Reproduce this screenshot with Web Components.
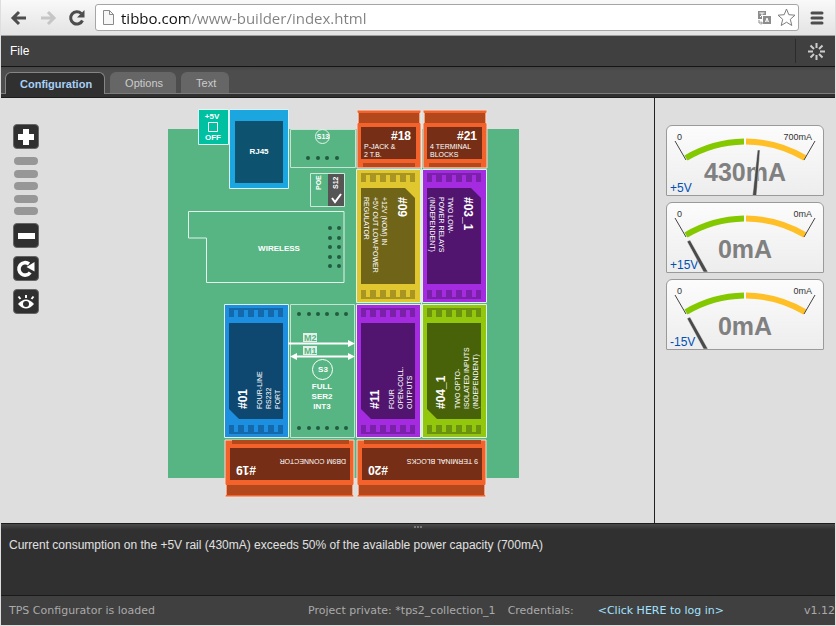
<!DOCTYPE html>
<html lang="en">
<head>
<meta charset="utf-8">
<title>TPS Configurator</title>
<style>
html, body { margin: 0; height: 100%; }
body { background: #dedede; font-family: "Liberation Sans", Arial, sans-serif; font-size: 12px; }
</style>
</head>
<body>
<tps-app></tps-app>
<script>
const define = (name, html, setup) => {
  const tpl = document.createElement('template');
  customElements.define(name, class extends HTMLElement {
    constructor() { super(); this.attachShadow({ mode: 'open' }); }
    connectedCallback() {
      if (this.shadowRoot.childNodes.length) return;
      tpl.innerHTML = typeof html === 'function' ? html(this) : html;
      this.shadowRoot.append(tpl.content.cloneNode(true));
      if (setup) setup(this);
    }
  });
};

define('browser-bar', `
<style>
:host { display: flex; align-items: center; height: 36px; box-sizing: border-box; padding: 0 0 0 3px; background: linear-gradient(#f9f9f9, #e3e3e3); border-bottom: 1px solid #a0a0a0; }
button { border: 0; padding: 0; background: none; display: grid; place-items: center; flex: none; }
.nav { width: 29px; height: 28px; }
.box { flex: 1; min-width: 0; display: flex; align-items: center; height: 25px; margin-left: 4px; padding: 0 1px 0 6px; background: #fff; border: 1px solid #a6a6a6; border-radius: 3px; }
.box svg { flex: none; }
input { flex: 1; min-width: 0; margin: 0 0 0 6px; padding: 0; height: 24px; border: 0; outline: 0; font: 15px "Open Sans", "Noto Sans", sans-serif; color: #808080; -webkit-text-fill-color: transparent; background: linear-gradient(90deg, #111 68px, #808080 68px); -webkit-background-clip: text; background-clip: text; }
.tool { width: 22px; height: 22px; }
.menu { width: 36px; height: 28px; }
</style>
<button class="nav" aria-label="Back"><svg width="18" height="16" viewBox="0 0 18 16" fill="none" stroke="#4d4d4d" stroke-width="3"><path d="M9 2 3 8l6 6M3 8h13"/></svg></button>
<button class="nav" aria-label="Forward" disabled><svg width="18" height="16" viewBox="0 0 18 16" fill="none" stroke="#c6c6c6" stroke-width="3"><path d="m9 2 6 6-6 6M15 8H2"/></svg></button>
<button class="nav" aria-label="Reload"><svg width="18" height="18" viewBox="0 0 18 18"><path d="M14.500 11.500a6.200 6.200 0 1 1-1.200-7" fill="none" stroke="#4d4d4d" stroke-width="3"/><path d="M16.500 1v7.500H9z" fill="#4d4d4d"/></svg></button>
<div class="box">
<svg width="13" height="17" viewBox="0 0 13 17" fill="#f7f7f7" stroke="#8a8a8a"><path d="M1.500 1.500h6l4 4v10h-10z"/><path d="M7.500 1.500v4h4" fill="none"/></svg>
<input aria-label="Address" value="tibbo.com/www-builder/index.html">
<button class="tool" aria-label="Translate"><svg width="15" height="15" viewBox="0 0 15 15"><path d="M1 1h8v4H5v4H1z" fill="#8c8c8c"/><path d="M6 6h8v8H6z" fill="#8c8c8c"/><path d="M2.500 3h5M5 3v2L3 7m5.500 5L10 8l1.500 4M9 11h2" fill="none" stroke="#fff"/><path d="M2 10v3h3M4 11.500l1.500 1.500L4 14.500" fill="none" stroke="#8c8c8c"/></svg></button>
<button class="tool" aria-label="Bookmark"><svg width="19" height="19" viewBox="0 0 19 19" fill="#fff" stroke="#7d7d7d" stroke-linejoin="round"><path d="m9.500 1 2.300 5.700 6.200.5-4.700 4.100 1.500 6.200-5.300-3.300-5.300 3.300 1.500-6.200L1 7.200l6.200-.5z"/></svg></button>
</div>
<button class="menu" aria-label="Menu"><svg width="14" height="14" viewBox="0 0 14 14" stroke="#4d4d4d" stroke-width="3" stroke-linecap="round"><path d="M2 2h10M2 7h10M2 12h10"/></svg></button>
`);

define('menu-bar', `
<style>
:host { display: flex; align-items: center; justify-content: space-between; height: 30px; background: #404040; border-bottom: 1px solid #161616; }
button { border: 0; background: none; color: #fff; font: inherit; padding: 0 9px; height: 24px; }
.spin { display: grid; place-items: center; width: 40px; padding: 0 0 0 2px; border-left: 1px solid #2b2b2b; }
</style>
<button>File</button>
<button class="spin" aria-label="Loading"><svg width="17" height="17" viewBox="0 0 17 17" stroke="#ccc" stroke-width="2"><path d="M8.500 0v5M8.500 12v5M0 8.500h5M12 8.500h5M2.500 2.500l3.500 3.500M11 11l3.500 3.500M14.500 2.500 11 6M6 11l-3.500 3.500"/></svg></button>
`);

define('tab-strip', `
<style>
:host { display: flex; align-items: flex-end; gap: 5px; height: 26px; padding: 0 4px; background: linear-gradient(#464646, #4d4d4d 4px); border-bottom: 1px solid #7c7c7c; }
::slotted(button) { height: 21px; border: 1px solid #666; border-bottom: 0; border-radius: 6px 6px 0 0; background: #666; color: #ccc; font: 11px "Liberation Sans", sans-serif; padding: 0 12px 0 14px; margin: 0; }
::slotted(button[aria-selected="true"]) { position: relative; height: 22px; margin-bottom: -1px; background: #303030; border-color: #858585; color: #a8d0f6; font-weight: bold; }
</style>
<slot></slot>
`);

define('zoom-tools', `
<style>
:host { display: flex; flex-direction: column; gap: 8px; padding: 26px 0 0 12px; }
button { display: grid; place-items: center; width: 26px; height: 25px; padding: 0; border: 1px solid #666; border-radius: 4px; background: #303030; }
.levels { display: flex; flex-direction: column; justify-content: space-between; height: 58px; padding: 0 1px; }
.levels button { width: 24px; height: 8px; border: 0; border-radius: 4px; background: #979797; }
</style>
<button aria-label="Zoom in"><svg width="18" height="18" viewBox="0 0 18 18" fill="#fff"><path d="M6 1h6v5h5v6h-5v5H6v-5H1V6h5z"/></svg></button>
<div class="levels"><button aria-label="Zoom level 5"></button><button aria-label="Zoom level 4"></button><button aria-label="Zoom level 3"></button><button aria-label="Zoom level 2"></button><button aria-label="Zoom level 1"></button></div>
<button aria-label="Zoom out"><svg width="18" height="18" viewBox="0 0 18 18" fill="#fff"><path d="M1 6h17v6H1z"/></svg></button>
<button aria-label="Rotate"><svg width="20" height="20" viewBox="0 0 20 20"><path d="M14.200 13.500A6.200 6.200 0 1 1 13 5" fill="none" stroke="#fff" stroke-width="3.600"/><path d="M18.500 3v9.500L10.500 8z" fill="#fff"/></svg></button>
<button aria-label="View"><svg width="20" height="20" viewBox="0 0 20 20"><path d="M2 12q8-9 16 0-8 9-16 0z" fill="#fff"/><circle cx="10" cy="12" r="3" fill="#303030"/><path d="M10 3v3M2.500 4.500l2 2.500M17.500 4.500l-2 2.500" stroke="#fff" stroke-width="2"/></svg></button>
`);

/* Circuit board: each helper returns the markup of one kind of part. */
const INK = 'fill="#fff"';
const turned = (x, y, angle, size, text, extra = '') =>
  `<text transform="translate(${x} ${y}) rotate(${angle})" font-size="${size}" ${INK} ${extra}>${text}</text>`;
const dots = (xs, ys) => ys.map(y => xs.map(x => `<circle cx="${x}" cy="${y}" r="2" fill="#225c40"/>`).join('')).join('');
const notches = (x, y) => [6, 16, 26, 36, 46].map(d => `M${x + d} ${y}h4v7h-4z`).join('');

const chip = (x, y, up, c, id, lines) => {
  const inner = up
    ? `M${x + 5} ${y + 19}h54v96h-44l-10-10z`
    : `M${x + 5} ${y + 19}h44l10 10v86h-54z`;
  const text = up
    ? turned(x + 23, y + 105, -90, 12, id, 'font-weight="bold"') + lines.map((t, i) => turned(x + 38 + 9 * i, y + 105, -90, 7, t)).join('')
    : turned(x + 42, y + 28, 90, 12, id, 'font-weight="bold"') + lines.map((t, i) => turned(x + 26 - 9 * i, y + 28, 90, 7, t)).join('');
  return `<g><path d="M${x + .5} ${y + .5}h64v133h-64z" fill="${c[0]}" stroke="#dff0e7"/>
    <path d="M${x + 5} ${y + 4}h54v9h-54zM${x + 5} ${y + 121}h54v9h-54z" fill="${c[1]}"/>
    <path d="${notches(x + 4, y + 6)}${notches(x + 4, y + 121)}" fill="${c[0]}"/>
    <path d="${inner}" fill="${c[2]}"/>${text}</g>`;
};
const topBlock = (x, id, lines) => `<g><path d="M${x} 110h64v3h-1v10h1v45h-64v-45h1v-10h-1z" fill="#f2622a" stroke="#eedfd8"/>
  <path d="M${x + 2} 113h60v10h-60zM${x + 6} 163h52v4h-52z" fill="#b3481d"/>
  <path d="M${x + 4} 127h55v32h-55z" fill="#762f16"/>
  <text x="${x + 54}" y="140" text-anchor="end" font-size="12" font-weight="bold" ${INK}>${id}</text>
  ${lines.map((t, i) => `<text x="${x + 7}" y="${149 + 8 * i}" font-size="7" ${INK}>${t}</text>`).join('')}</g>`;
const bottomBlock = (x, id, label) => `<g><path d="M${x} 440h129v45h-1v10h1v2h-129v-2h1v-10h-1z" fill="#f2622a" stroke="#eedfd8"/>
  <path d="M${x + 7} 440h117v4h-117zM${x + 2} 485h125v10h-125z" fill="#b3481d"/>
  <path d="M${x + 5} 448h120v32h-120z" fill="#762f16"/>
  ${turned(x + 31, 466, 180, 12, id, 'font-weight="bold"')}${turned(x + 121, 459, 180, 7, label)}</g>`;

const BLUE = ['#1c8fe0', '#1369ab', '#0e4770'], GOLD = ['#e1c72f', '#a99622', '#6f6418'];
const VIOLET = ['#a52be0', '#7b20a8', '#511570'], LIME = ['#93c70e', '#6c9310', '#486209'];

define('circuit-board', `
<style>
:host { display: block; }
svg { display: block; margin: 0 auto; font-family: "Liberation Sans", sans-serif; }
</style>
<svg width="351" height="390" viewBox="168 108 351 390" role="img" aria-label="Board layout">
<path d="M168 129h351v349H168z" fill="#57b583"/>
<g fill="none" stroke="#c5e5d4">
<path d="M290.500 129.500h65v38h-65zM290.500 304.500h64v133h-64z"/>
<path d="M188.500 211.500h155.500v71H206.500v-44.500h-18z" stroke="#e4f3eb"/>
<path d="M421.500 112v325" stroke="#d8eee2"/>
</g>
<path d="M198.500 109.500h30v35h-30z" fill="#00c0a2" stroke="#dff5f0"/>
<path d="M208.500 122.500h9v9h-9z" fill="none" stroke="#fff"/>
<g font-size="8" font-weight="bold" text-anchor="middle" ${INK}>
<text x="212" y="119">+5V</text><text x="213" y="140">OFF</text>
</g>
<path d="M229.500 109.500h59v79h-59z" fill="#1ca6e0" stroke="#dceff8"/>
<path d="M235 121h48v62h-48z" fill="#0d5370"/>
<circle cx="322.500" cy="136.500" r="7" fill="none" stroke="#e4f3eb"/>
<circle cx="322.500" cy="369.500" r="10" fill="none" stroke="#fff"/>
<g font-size="8" font-weight="bold" text-anchor="middle" ${INK}>
<text x="259" y="154">RJ45</text><text x="279" y="251">WIRELESS</text>
<text x="323" y="139" font-size="7">S13</text><text x="323" y="372">S3</text>
<text x="322" y="389">FULL</text><text x="322" y="399">SER2</text><text x="322" y="409">INT3</text>
</g>
<path d="M310.500 173.500h34v33h-34z" fill="#57b583" stroke="#d0e8dc"/>
<path d="M328 174h16v32h-16z" fill="#555"/>
${turned(321, 190, -90, 7, 'POE', 'font-weight="bold"')}${turned(338, 189, -90, 7, 'S12', 'font-weight="bold"')}
<path d="m332 198 3 4 6-8" fill="none" stroke="#fff" stroke-width="2"/>
${dots([308, 318, 327, 337], [158])}
${dots([330, 339], [228, 238, 247, 257, 266])}
${dots([299, 309, 318, 327, 337, 346], [314, 428])}
<path d="M303 333h14v9h-14zM303 346h14v9h-14z" fill="#e4f1ea"/>
<g font-size="9" font-weight="bold" fill="#57b583"><text x="304" y="341">M2</text><text x="304" y="354">M1</text></g>
${chip(224, 304, true, BLUE, '#01', ['FOUR-LINE', 'RS232', 'PORT'])}
${chip(356, 304, true, VIOLET, '#11', ['FOUR', 'OPEN-COLL.', 'OUTPUTS'])}
${chip(422, 304, true, LIME, '#04_1', ['TWO OPTO-', 'ISOLATED INPUTS', '(INDEPENDENT)'])}
${chip(356, 169, false, GOLD, '#09', ['+12V (NOM) IN', '+5V OUT LOW-POWER', 'REGULATOR'])}
${chip(422, 169, false, VIOLET, '#03_1', ['TWO LOW-', 'POWER RELAYS', '(INDEPENDENT)'])}
${topBlock(357, '#18', ['P-JACK &amp;', '2 T.B.'])}
${topBlock(423, '#21', ['4 TERMINAL', 'BLOCKS'])}
${bottomBlock(225, '#19', 'DB9M CONNECTOR')}
${bottomBlock(357, '#20', '9 TERMINAL BLOCKS')}
<path d="M288 343.500h62M295 356.500h55" stroke="#fff" stroke-width="2"/>
<path d="M348 340l7 3.500-7 3.500zM348 353l7 3.500-7 3.500zM297 353l-7 3.500 7 3.500z" fill="#fff"/>
</svg>`);

define('power-gauge', el => {
  const needle = el.hasAttribute('load')
    ? 'M91.500 25h2.500l-3.500 46h-4z' : 'M21 39.500l3-1.500 18 32h-4.500z';
  return `
<style>
:host { display: block; box-sizing: border-box; border: 1px solid #9a9a9a; border-radius: 6px 6px 1px 1px; background: linear-gradient(#fcfcfc, #ededed); }
svg { display: block; margin: 0 auto; font-family: "Liberation Sans", sans-serif; }
</style>
<svg width="156" height="69" viewBox="1 1 156 69" role="img" aria-label="${el.getAttribute('rail')} gauge">
<path d="M20 33A118 118 0 0 1 78 16.500" fill="none" stroke="#84c800" stroke-width="6"/>
<path d="M80 16.500A118 118 0 0 1 139 33" fill="none" stroke="#ffbf26" stroke-width="6"/>
<path d="M9 16l11 19M149 16l-11 19" stroke="#444"/>
<text x="79" y="56" text-anchor="middle" font-size="25" font-weight="bold" fill="#808080">${el.getAttribute('value')}</text>
<text x="11" y="15" font-size="9" fill="#333">0</text>
<text x="146" y="15" text-anchor="end" font-size="9" fill="#333">${el.getAttribute('max')}</text>
<text x="4" y="67" font-size="12" fill="#0050b4">${el.getAttribute('rail')}</text>
<path d="${needle}" fill="#4a4a4a" stroke="#f4f4f4" stroke-width=".5"/>
</svg>`;
});

define('message-pane', `
<style>
:host { display: block; height: 71px; background: #303030; color: #e0e0e0; border-top: 1px solid #1d1d1d; font-size: 12px; }
.grip { display: flex; justify-content: center; gap: 1px; height: 6px; background: linear-gradient(#4a4a4a, #303030); }
.grip i { width: 2px; height: 2px; margin-top: 2px; background: #777; }
p { margin: 8px 8px 0; line-height: 14px; }
</style>
<div class="grip"><i></i><i></i><i></i></div>
<p><slot></slot></p>`);

define('status-bar', `
<style>
:host { display: flex; align-items: center; height: 30px; box-sizing: border-box; padding-left: 8px; background: #404040; border-top: 1px solid #1a1a1a; color: #aaa; font: 11px "DejaVu Sans", Verdana, sans-serif; white-space: nowrap; overflow: hidden; }
.left { flex: 1; }
.project { margin-right: 12px; }
a { margin: 0 80px 0 24px; color: #a5e2ff; text-decoration: none; }
</style>
<span class="left">TPS Configurator is loaded</span>
<span class="project">Project private: *tps2_collection_1</span>
<span>Credentials:</span>
<a href="#login">&lt;Click HERE to log in&gt;</a>
<span>v1.12</span>`);

define('tps-app', `
<style>
:host { display: flex; flex-direction: column; min-height: 100vh; box-sizing: border-box; padding: 0 1px 1px; }
.rule { height: 3px; background: #303030; border-bottom: 1px solid #1c1c1c; }
main { flex: 1; display: flex; background: #dedede; }
circuit-board { flex: 1; padding: 10px 7px 0 0; }
aside { display: flex; flex-direction: column; gap: 6px; width: 158px; padding: 27px 11px; border-left: 1px solid #222; }
</style>
<browser-bar></browser-bar>
<menu-bar></menu-bar>
<tab-strip role="tablist">
<button role="tab" aria-selected="true">Configuration</button>
<button role="tab" aria-selected="false">Options</button>
<button role="tab" aria-selected="false">Text</button>
</tab-strip>
<div class="rule"></div>
<main>
<zoom-tools></zoom-tools>
<circuit-board></circuit-board>
<aside>
<power-gauge rail="+5V" value="430mA" max="700mA" load></power-gauge>
<power-gauge rail="+15V" value="0mA" max="0mA"></power-gauge>
<power-gauge rail="-15V" value="0mA" max="0mA"></power-gauge>
</aside>
</main>
<message-pane>Current consumption on the +5V rail (430mA) exceeds 50% of the available power capacity (700mA)</message-pane>
<status-bar></status-bar>`);
</script>
</body>
</html>
